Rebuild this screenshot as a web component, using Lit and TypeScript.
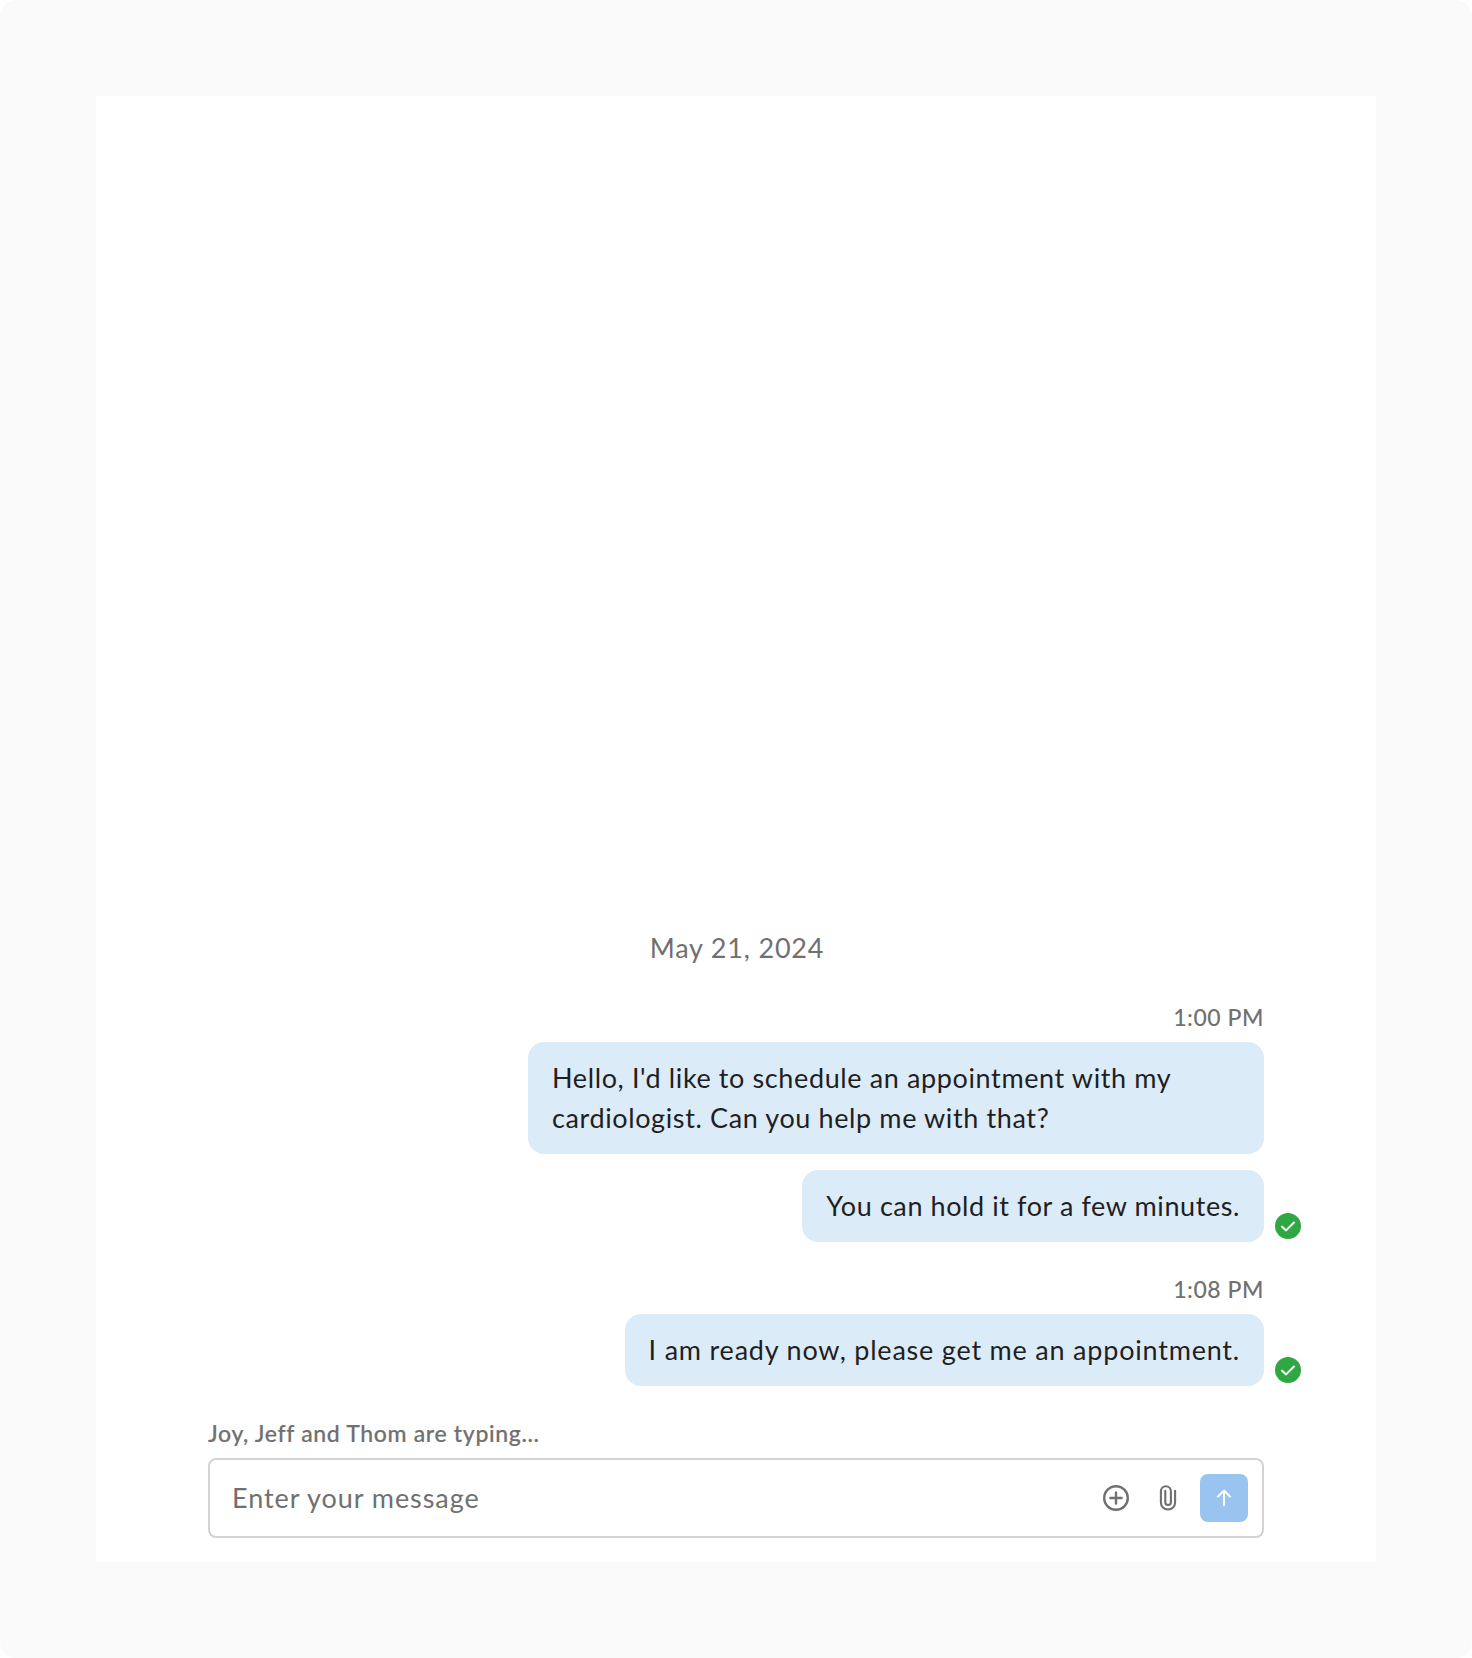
import { LitElement, html, css, svg, nothing } from "lit";
import { customElement, property } from "lit/decorators.js";

interface Message {
  text: string;
  delivered?: boolean;
  /** Letter spacing in px */
  tracking: number;
}

interface Group {
  time: string;
  messages: Message[];
}

const GROUPS: Group[] = [
  {
    time: "1:00 PM",
    messages: [
      {
        text: "Hello, I'd like to schedule an appointment with my cardiologist. Can you help me with that?",
        tracking: 0.62,
      },
      { text: "You can hold it for a few minutes.", delivered: true, tracking: 0.59 },
    ],
  },
  {
    time: "1:08 PM",
    messages: [
      { text: "I am ready now, please get me an appointment.", delivered: true, tracking: 0.79 },
    ],
  },
];

const plusIcon = svg`<circle cx="16" cy="16" r="11.8"/><path d="M16 10.4v11.2M10.4 16h11.2"/>`;
const clipIcon = svg`<path d="M23.1 8.8v11.6a7.1 7.1 0 0 1-14.2 0V9.2a5 5 0 0 1 10 0v11a2.8 2.8 0 0 1-5.6 0V8.8"/>`;
const arrowIcon = svg`<path d="M16 23.2V8.6M9.9 14.6 16 8.5l6.1 6.1"/>`;

@customElement("chat-bubble")
export class ChatBubble extends LitElement {
  @property({ attribute: false }) message!: Message;

  static styles = css`
    :host {
      display: block;
      position: relative;
      max-width: 736px;
      box-sizing: border-box;
      padding: 16px 24px;
      border-radius: 16px;
      background: #dcebf8;
      color: #1f1f1f;
      font-size: 27px;
      line-height: 40px;
    }
    .status {
      position: absolute;
      left: calc(100% + 11px);
      bottom: 3px;
      width: 26px;
      height: 26px;
      display: block;
    }
  `;

  render() {
    const { text, tracking, delivered } = this.message;
    return html`<span style="letter-spacing:${tracking}px">${text}</span>${delivered
        ? html`<svg class="status" viewBox="0 0 26 26">
            <circle cx="13" cy="13" r="13" fill="#2fa843" />
            <path
              d="M7 13.6 11 17.4 19 9.5"
              fill="none"
              stroke="#fff"
              stroke-width="2"
              stroke-linecap="round"
              stroke-linejoin="round"
            />
          </svg>`
        : nothing}`;
  }
}

@customElement("chat-composer")
export class ChatComposer extends LitElement {
  static styles = css`
    :host {
      display: flex;
      align-items: center;
      box-sizing: border-box;
      height: 80px;
      padding: 0 14px 0 22px;
      border: 2px solid #d3d3d3;
      border-radius: 8px;
      color: #707070;
    }
    .placeholder {
      flex: 1;
      font-size: 27px;
      line-height: 40px;
      letter-spacing: 0.93px;
    }
    .icon {
      display: block;
      width: 32px;
      height: 32px;
      fill: none;
      stroke: currentColor;
      stroke-width: 2.4;
      stroke-linecap: round;
      stroke-linejoin: round;
    }
    .tools {
      display: flex;
      align-items: center;
      gap: 20px;
      margin-right: 16px;
    }
    .clip {
      stroke-width: 2.1;
    }
    .send {
      display: flex;
      align-items: center;
      justify-content: center;
      width: 48px;
      height: 48px;
      padding: 0;
      border: 0;
      border-radius: 8px;
      background: #99c4f0;
      color: #fff;
    }
    .send .icon {
      stroke-width: 2;
    }
  `;

  render() {
    return html`
      <div class="placeholder">Enter your message</div>
      <div class="tools">
        <svg class="icon" viewBox="0 0 32 32">${plusIcon}</svg>
        <svg class="icon clip" viewBox="0 0 32 32">${clipIcon}</svg>
      </div>
      <button class="send"><svg class="icon" viewBox="0 0 32 32">${arrowIcon}</svg></button>
    `;
  }
}

@customElement("app-root")
export class AppRoot extends LitElement {
  static styles = css`
    :host {
      display: block;
      box-sizing: border-box;
      height: 1658px;
      padding: 96px;
      border-radius: 16px;
      background: #fafafa;
      font-family: "Lato", "Open Sans", sans-serif;
    }
    .panel {
      box-sizing: border-box;
      height: 1466px;
      padding: 0 112px 24px;
      background: #fff;
      display: flex;
      flex-direction: column;
      justify-content: flex-end;
    }
    .date {
      text-align: center;
      color: #707070;
      font-size: 27px;
      line-height: 40px;
      letter-spacing: 0.8px;
      margin-bottom: 34px;
      padding-left: 2px;
    }
    .group {
      display: flex;
      flex-direction: column;
      align-items: flex-end;
      margin-bottom: 32px;
    }
    .time,
    .typing {
      color: #707070;
      font-size: 23px;
      line-height: 30px;
      letter-spacing: 0.55px;
      font-weight: 500;
      margin-bottom: 10px;
    }
    .typing {
      letter-spacing: 0.66px;
      -webkit-text-stroke: 0.2px #707070;
    }
    .bubbles {
      display: flex;
      flex-direction: column;
      align-items: flex-end;
      gap: 16px;
    }
  `;

  render() {
    return html`
      <main class="panel">
        <div class="date">May 21, 2024</div>
        ${GROUPS.map(
          (g) => html`<section class="group">
            <div class="time">${g.time}</div>
            <div class="bubbles">
              ${g.messages.map((m) => html`<chat-bubble .message=${m}></chat-bubble>`)}
            </div>
          </section>`
        )}
        <div class="typing">Joy, Jeff and Thom are typing...</div>
        <chat-composer></chat-composer>
      </main>
    `;
  }
}
